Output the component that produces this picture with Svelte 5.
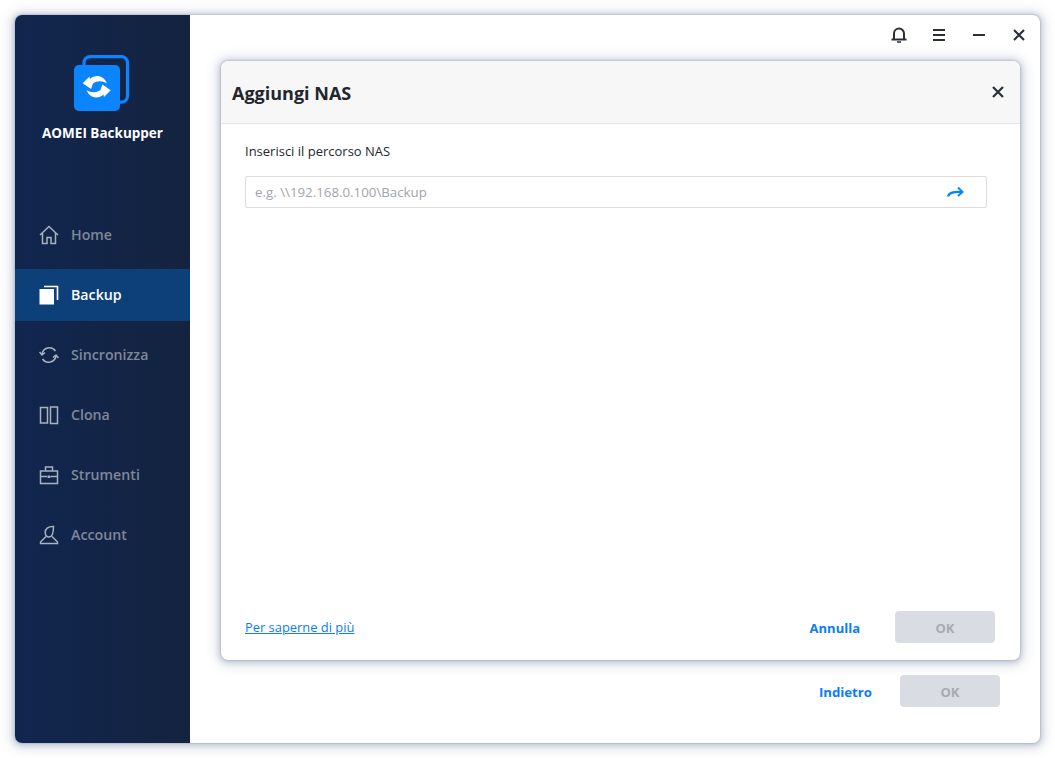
<script>
  const nav = [
    { id: 'home', label: 'Home' },
    { id: 'backup', label: 'Backup', active: true },
    { id: 'sync', label: 'Sincronizza' },
    { id: 'clone', label: 'Clona' },
    { id: 'tools', label: 'Strumenti' },
    { id: 'account', label: 'Account' }
  ];
</script>

<div class="window">
  <aside class="sidebar">
    <div class="brand">
      <svg class="logo" width="56" height="56" viewBox="0 0 56 56">
        <rect x="10" y="1.600" width="43.500" height="45.500" rx="6" fill="none" stroke="#0a84ff" stroke-width="3.200"/>
        <rect x="0" y="10" width="46" height="46" rx="5" fill="#0a84ff"/>
        <g fill="#fff">
          <path d="M8.700 28.300 L15.500 21.500 L15.800 24 C21 19.500 29 19.500 33 28.500 C28.500 25.500 23 25.500 19 28.500 L17 34 Z"/>
          <path d="M8.700 28.300 L15.500 21.500 L15.800 24 C21 19.500 29 19.500 33 28.500 C28.500 25.500 23 25.500 19 28.500 L17 34 Z" transform="rotate(180 22.700 31.800)"/>
        </g>
      </svg>
      <div class="brand-name">AOMEI Backupper</div>
    </div>
    <nav class="nav">
      {#each nav as item}
        <div class="nav-item" class:active={item.active}>
          <svg class="nav-icon" width="20" height="20" viewBox="0 0 20 20" fill="none" stroke="currentColor" stroke-width="1.500">
            {#if item.id === 'home'}
              <path d="M1 10 L10 1.500 L19 10 M3.500 8 V18.500 H8 V12.500 H12 V18.500 H16.500 V8"/>
            {:else if item.id === 'backup'}
              <rect x="0.500" y="4" width="14.500" height="15.500" fill="#fff" stroke="none"/>
              <path d="M5 1.500 H18.500 V15" stroke="#fff" stroke-width="1.600"/>
            {:else if item.id === 'sync'}
              <path d="M3 9 A7.500 7.500 0 0 1 16.500 6 M17 11 A7.500 7.500 0 0 1 3.500 14"/>
              <path d="M0.500 7 L3 10 L6 7.500 M19.500 13 L17 10 L14 12.500"/>
            {:else if item.id === 'clone'}
              <path d="M1.500 2.500 H8.500 V18 H1.500 Z M11.500 2 H18.500 V18.500 H11.500 Z"/>
            {:else if item.id === 'tools'}
              <path d="M1.500 6 H18.500 V18.500 H1.500 Z M1.500 11.500 H8 M12 11.500 H18.500 M6.500 6 V2 H13.500 V6"/>
              <rect x="8.500" y="10.500" width="3" height="2.500" fill="currentColor" stroke="none"/>
            {:else}
              <path d="M14.500 1.500 C9 1.200 6 4 6.200 7.500 C6.400 10.500 8 12 10 12 C13 12 14.500 9 14.500 1.500 Z"/>
              <path d="M7 11.500 L1.500 17 V18.500 H18.500 V17 L13 11.500"/>
            {/if}
          </svg>
          <span class="nav-label">{item.label}</span>
        </div>
      {/each}
    </nav>
  </aside>

  <main class="main">
    <header class="topbar">
      <svg class="bell" width="16" height="16" viewBox="0 0 16 16" fill="none" stroke="#2b3038" stroke-width="2">
        <path d="M3 12 V6.500 A5 5 0 0 1 13 6.500 V12"/>
        <path d="M0.500 12.500 H15.500"/>
        <path d="M6 15 H10" stroke-width="1.500"/>
      </svg>
      <svg width="14" height="14" viewBox="0 0 14 14" stroke="#2b3038" stroke-width="2">
        <path d="M1 2 H13 M1 7 H13 M1 12 H13"/>
      </svg>
      <svg width="14" height="14" viewBox="0 0 14 14" stroke="#2b3038" stroke-width="2">
        <path d="M1 7 H13"/>
      </svg>
      <svg width="14" height="14" viewBox="0 0 14 14" stroke="#2b3038" stroke-width="2.200">
        <path d="M2 2 L12 12 M12 2 L2 12"/>
      </svg>
    </header>
    <div class="spacer"></div>
    <footer class="page-footer">
      <span class="link-btn">Indietro</span>
      <button class="ok" disabled>OK</button>
    </footer>

    <section class="dialog">
      <div class="dialog-head">
        <h1>Aggiungi NAS</h1>
        <svg class="dialog-close" width="12" height="12" viewBox="0 0 12 12" stroke="#2b3038" stroke-width="2.200">
          <path d="M1 1 L11 11 M11 1 L1 11"/>
        </svg>
      </div>
      <div class="dialog-body">
        <div class="field-label">Inserisci il percorso NAS</div>
        <div class="input">
          <span>e.g. \\192.168.0.100\Backup</span>
          <svg width="17" height="12" viewBox="0 0 17 12" fill="none" stroke="#0a84ff" stroke-width="2.400">
            <path d="M1 10.500 C2 6.500 6 5.500 15 6"/>
            <path d="M11 1.500 L15.500 6 L11 10" stroke-width="2"/>
          </svg>
        </div>
      </div>
      <div class="dialog-foot">
        <span class="more">Per saperne di più</span>
        <span class="link-btn cancel">Annulla</span>
        <button class="ok" disabled>OK</button>
      </div>
    </section>
  </main>
</div>

<style>
  :global(html), :global(body) {
    margin: 0;
    height: 100%;
    background: #fff;
    font-family: "Open Sans", "Noto Sans", sans-serif;
  }
  :global(#app) {
    padding: 15px 0 0 15px;
    height: 758px;
    box-sizing: border-box;
    overflow: visible;
  }
  .window {
    display: flex;
    width: 1025px;
    height: 728px;
    background: #fff;
    border-radius: 7px;
    box-shadow: 0 0 2px 0 #8f98b0, 0 1px 6px 1px #b9bfce, 0 1px 13px 5px #e3e6ed;
  }
  .sidebar {
    width: 175px;
    flex: none;
    display: flex;
    flex-direction: column;
    color: #fff;
    border-radius: 7px 0 0 7px;
    background: linear-gradient(90deg, #11264f, #14233f);
  }
  .brand {
    display: flex;
    flex-direction: column;
    align-items: center;
    padding-top: 40px;
    height: 194px;
    box-sizing: border-box;
  }
  .logo { margin-right: 2px; }
  .brand-name {
    margin-top: 12px;
    font-size: 13.500px;
    line-height: 20px;
    font-weight: 700;
  }
  .nav { display: flex; flex-direction: column; gap: 8px; }
  .nav-item {
    height: 52px;
    display: flex;
    align-items: center;
    gap: 12px;
    padding-left: 24px;
    font-size: 14.200px;
    font-weight: 600;
    color: #7f8899;
  }
  .nav-label { margin-bottom: 2px; }
  .nav-icon { color: #aab1c0; flex: none; }
  .nav-item.active {
    background: #0d4079;
    color: #fff;
  }
  .main {
    position: relative;
    flex: 1;
    display: flex;
    flex-direction: column;
    min-width: 0;
  }
  .topbar {
    height: 40px;
    display: flex;
    align-items: center;
    justify-content: flex-end;
    gap: 26px;
    padding-right: 14px;
  }
  .bell { margin-right: -1px; }
  .spacer { flex: 1; }
  .page-footer {
    display: flex;
    align-items: center;
    justify-content: flex-end;
    gap: 28px;
    padding: 0 40px 36px 0;
  }
  .link-btn {
    color: #0a7cff;
    font-size: 13.200px;
    line-height: 18px;
    font-weight: 700;
    padding-top: 2px;
  }
  .ok {
    width: 100px;
    height: 32px;
    border: none;
    border-radius: 4px;
    padding: 2px 0 0;
    background: #d9dce2;
    color: #a5aab4;
    font: 700 13px "Open Sans", sans-serif;
  }
  .dialog {
    position: absolute;
    left: 31px;
    top: 46px;
    width: 799px;
    height: 599px;
    display: flex;
    flex-direction: column;
    background: #fff;
    border-radius: 7px;
    box-shadow: 0 0 2px 0 #8f98b0, 0 1px 6px 1px #b9bfce, 0 1px 13px 5px #e3e6ed;
  }
  .dialog-head {
    height: 63px;
    flex: none;
    box-sizing: border-box;
    display: flex;
    align-items: center;
    justify-content: space-between;
    padding: 2px 16px 0 11px;
    background: #f7f7f7;
    border-bottom: 1px solid #e4e4e4;
    border-radius: 7px 7px 0 0;
  }
  .dialog-close { margin-top: -2px; }
  h1 {
    margin: 0;
    font-size: 18px;
    font-weight: 700;
    color: #22262c;
  }
  .dialog-body {
    flex: 1;
    padding: 18px 33px 0 24px;
  }
  .field-label {
    font-size: 13px;
    line-height: 18px;
    color: #23272e;
  }
  .input {
    margin-top: 16px;
    height: 32px;
    box-sizing: border-box;
    border: 1px solid #dcdcdc;
    border-radius: 2px;
    display: flex;
    align-items: center;
    justify-content: space-between;
    padding: 0 22px 0 9px;
    color: #a1a5ab;
    font-size: 13.300px;
  }
  .dialog-foot {
    display: flex;
    align-items: center;
    padding: 0 25px 17px 24px;
  }
  .more {
    color: #0a7cff;
    font-size: 12.900px;
    text-decoration: underline;
    flex: 1;
  }
  .cancel { margin-right: 35px; font-size: 13px; }
</style>
